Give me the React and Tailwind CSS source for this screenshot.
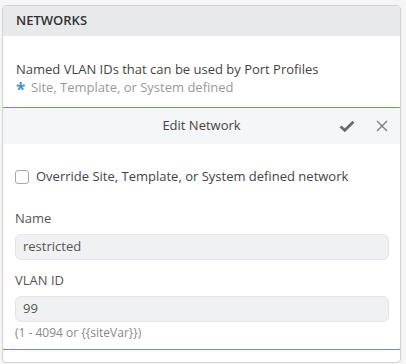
export default function App() {
  return (
    <div className="w-[406px] h-[364px] bg-[#f5f5f5] pt-[5px] px-[2px] overflow-hidden" style={{ fontFamily: '"Open Sans", sans-serif' }}>
      <div className="w-[399px] h-[358px] bg-white border border-[#d2d2d2] rounded-[4px] overflow-hidden flex flex-col">
        <div className="h-[30px] shrink-0 bg-[#e8e9ea] px-[13px] flex items-center text-[13px] font-semibold text-[#333]">NETWORKS</div>
        <div className="pt-[24px] px-[13px] text-[13px] leading-[18px]">
          <div className="text-[#444]">Named VLAN IDs that can be used by Port Profiles</div>
          <div className="flex items-center h-[18px] text-[#999]">
            <span className="text-[#4a8fd0] text-[17px] font-bold w-[15px] h-[18px] leading-[18px] relative top-[3px]">*</span>
            <span>Site, Template, or System defined</span>
          </div>
        </div>
        <div className="mt-[11px] -mx-[1px] border border-[#1aaeed] rounded-[2px] h-[243px] flex flex-col">
          <div className="h-[36px] shrink-0 bg-[#f5f6f7] relative flex items-center justify-center text-[13px] text-[#444]">
            <span>Edit Network</span>
            <svg className="absolute left-[336px] top-[12px]" width="16" height="12" viewBox="0 0 16 12">
              <path d="M1.5 6.5 L5.8 10.3 L14.5 1.8" fill="none" stroke="#6b6b6b" strokeWidth="2.8" strokeLinejoin="miter" />
            </svg>
            <svg className="absolute left-[373px] top-[12px]" width="12" height="12" viewBox="0 0 12 12">
              <path d="M1 1 L11 11 M11 1 L1 11" fill="none" stroke="#777" strokeWidth="1.2" />
            </svg>
          </div>
          <div className="px-[12px] pt-[24px] text-[13px]">
            <div className="flex items-center h-[18px]">
              <span className="w-[14px] h-[14px] border border-[#a8a8a8] rounded-[3px] bg-white mr-[7px]"></span>
              <span className="text-[#444]">Override Site, Template, or System defined network</span>
            </div>
            <div className="mt-[23px] text-[#555] leading-[18px]">Name</div>
            <div className="mt-[7px] h-[26px] w-[374px] bg-[#f0f1f2] border border-[#e3e4e6] rounded-[6px] px-[7px] flex items-center text-[#555]">restricted</div>
            <div className="mt-[11px] text-[#555] leading-[18px]">VLAN ID</div>
            <div className="mt-[7px] h-[26px] w-[374px] bg-[#f0f1f2] border border-[#e3e4e6] rounded-[6px] px-[7px] flex items-center text-[#555]">99</div>
            <div className="mt-[3px] text-[12px] text-[#888] leading-[16px]">(1 - 4094 or {'{{siteVar}}'})</div>
          </div>
        </div>
      </div>
    </div>
  );
}
